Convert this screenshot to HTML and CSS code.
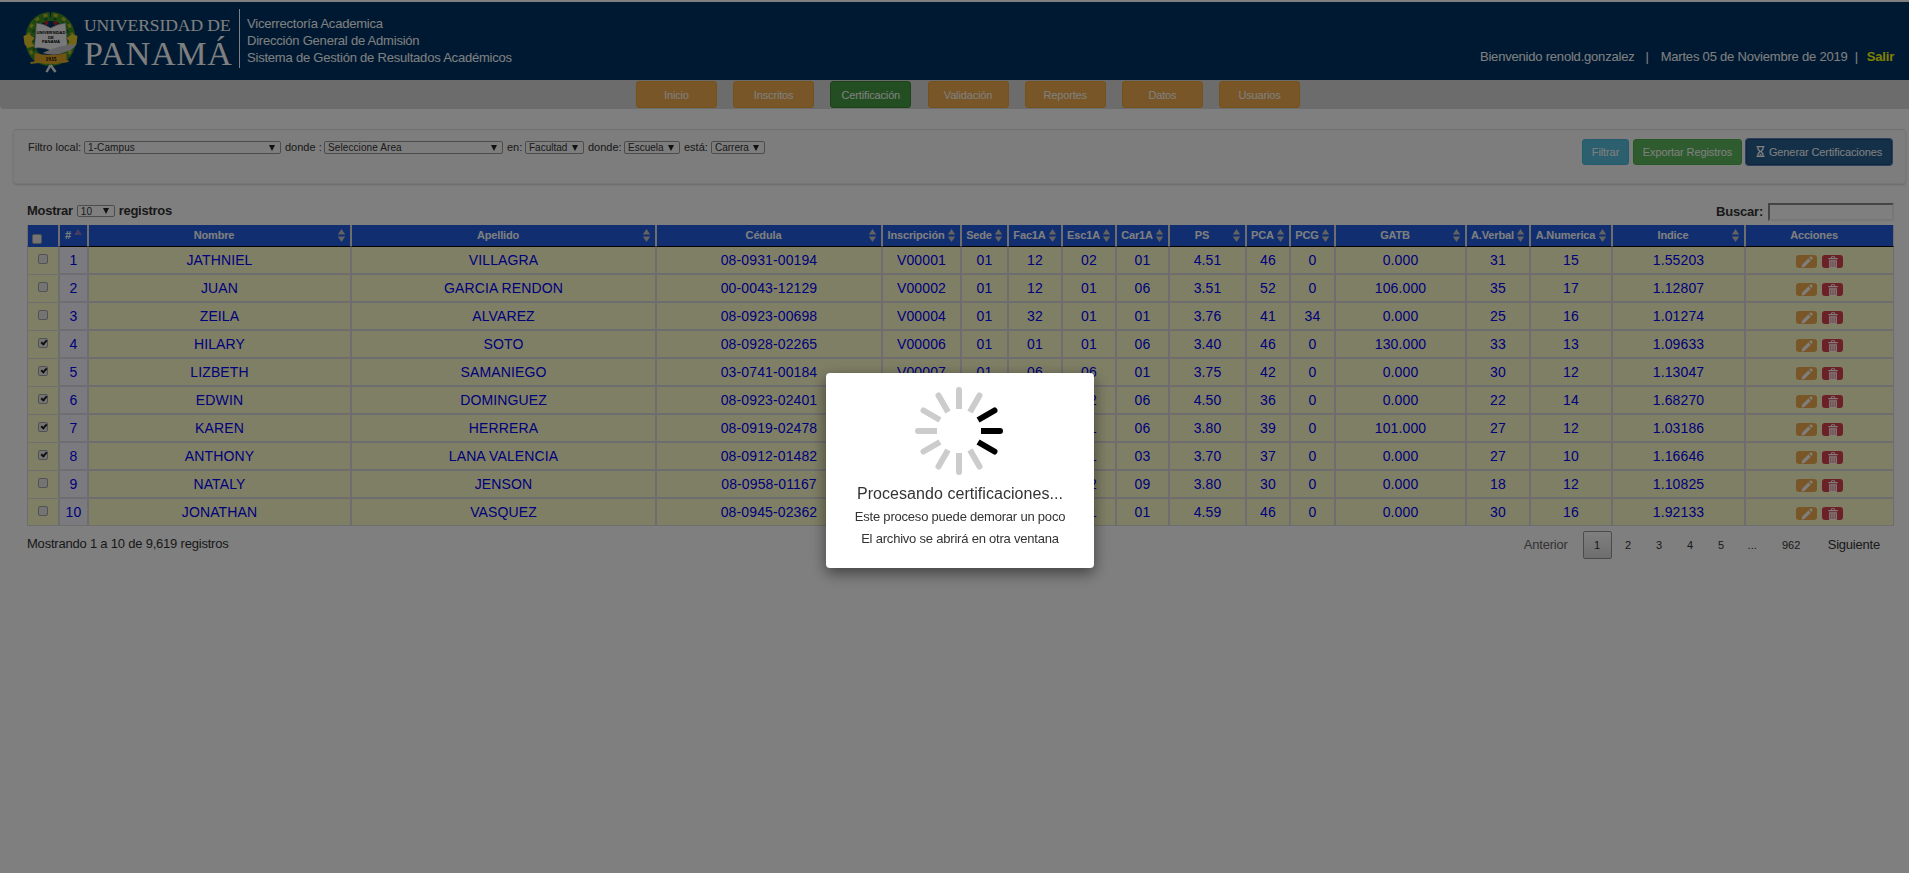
FILE: index.html
```html
<!DOCTYPE html>
<html lang="es">
<head>
<meta charset="utf-8">
<title>Certificación</title>
<link rel="stylesheet" href="styles.css">
</head>
<body>
<svg class="defs" width="0" height="0">
  <symbol id="pencil" viewBox="0 0 12 12"><path d="M0.4 11.8L1.3 8.5 7.4 2.4 9.7 4.7 3.6 10.8ZM8.1 1.7L9.3.6Q9.9.1 10.5.7L11.4 1.6Q12 2.2 11.5 2.8L10.4 4Z"/></symbol>
  <symbol id="trash" viewBox="0 0 12 13"><path fill-rule="evenodd" d="M1 2.2H4V1Q4 .3 4.7.3H7.3Q8 .3 8 1V2.2H11V3.6H1ZM5 2.2H7V1.2H5ZM1.8 4.5H10.2V13H1.8ZM3.3 5.6V12H4.1V5.6ZM5.6 5.6V12H6.4V5.6ZM7.9 5.6V12H8.7V5.6Z"/></symbol>
  <symbol id="sort" viewBox="0 0 8 14"><path d="M4 0L8 6H0ZM4 14L0 8H8Z"/></symbol>
</svg>

<header class="top">
  <svg class="crest" viewBox="0 0 56 64">
    <path d="M27 3C12 4 3 15 3 31C3 46 12 56 27 57L29 57C44 56 53 46 53 31C53 15 44 4 29 3L28 10Z" fill="#3f8f24"/>
    <path d="M27 12C17 13 12 20 12 31C12 41 17 48 28 48C39 48 44 41 44 31C44 20 39 13 29 12Z" fill="#003366"/>
    <g fill="none" stroke-width="3" stroke="#b8b52a" stroke-dasharray="4 5"><path d="M25 6C12 8 6 18 6 31C6 44 13 53 25 54"/><path d="M31 6C44 8 50 18 50 31C50 44 43 53 31 54"/></g>
    <g fill="none" stroke-width="2" stroke="#1e5f22" stroke-dasharray="3 6"><path d="M25 10C14 12 10 20 10 31C10 42 16 49 25 50"/><path d="M31 10C42 12 46 20 46 31C46 42 40 49 31 50"/></g>
    <path d="M1 27L6 25 12 29 9 33 12 37 5 39 2 35ZM55 27L50 25 44 29 47 33 44 37 51 39 54 35Z" fill="#e8c82c"/>
    <circle cx="24" cy="14" r="2" fill="#c81e1e"/><circle cx="33" cy="14" r="2" fill="#c81e1e"/>
    <path d="M14 14Q22 15 28 19Q35 15 43 14L45 39Q35 38 29 42Q22 38 12 39Z" fill="#f2f2f2" stroke="#9a9a9a" stroke-width=".6"/>
    <text x="28.500" y="25" class="crest-text">UNIVERSIDAD</text>
    <text x="28.500" y="29.500" class="crest-text">DE</text>
    <text x="28.500" y="34" class="crest-text">PANAMÁ</text>
    <path d="M20 44Q36 36 54 35Q50 42 42 43Q34 48 20 44Z" fill="#c9c9cc"/>
    <path d="M12 44Q28 48 44 44L44 53Q28 57 12 53Z" fill="#e2a92b"/>
    <path d="M8 54L16 53M40 53L46 52" stroke="#d9b52a" stroke-width="2"/>
    <text x="28.500" y="52" class="crest-year">1935</text>
    <path d="M28 56L24 63M28 56L33 63" stroke="#e9e9e9" stroke-width="2.500"/>
  </svg>
  <div class="brand"><div class="brand-sm">UNIVERSIDAD DE</div><div class="brand-lg">PANAMÁ</div></div>
  <div class="dept"><div>Vicerrectoría Academica</div><div>Dirección General de Admisión</div><div>Sistema de Gestión de Resultados Académicos</div></div>
  <div class="session"><span>Bienvenido renold.gonzalez</span><span class="bar1">|</span><span>Martes 05 de Noviembre de 2019</span><span class="bar2">|</span><b>Salir</b></div>
</header>
<nav class="menu">
  <a>Inicio</a><a>Inscritos</a><a class="active">Certificación</a><a>Validación</a><a>Reportes</a><a>Datos</a><a>Usuarios</a>
</nav>

<section class="filters">
  <div class="fields">
    <span class="w-local">Filtro local:</span><span class="select s1"><span>1-Campus</span><i></i></span>
    <span class="w-donde">donde :</span><span class="select s2"><span>Seleccione Area</span><i></i></span>
    <span class="w-en">en:</span><span class="select s3"><span>Facultad</span><i></i></span>
    <span class="w-donde2">donde:</span><span class="select s4"><span>Escuela</span><i></i></span>
    <span class="w-esta">está:</span><span class="select s5"><span>Carrera</span><i></i></span>
  </div>
  <div class="actions">
    <a class="btn info">Filtrar</a><a class="btn success">Exportar Registros</a><a class="btn primary"><svg class="glass" viewBox="0 0 9 11"><path d="M.5 .7H8.500M.5 10.300H8.500M2 1V3L4 5.500 2 8V10M7 1V3L5 5.500 7 8V10" stroke="#fff" stroke-width="1.300" fill="none"/><path d="M3 9.500L4.500 7.500 6 9.500Z" fill="#fff"/></svg>Generar Certificaciones</a>
  </div>
</section>

<main>
  <div class="tools">
    <div class="length"><b>Mostrar</b><span class="select s6"><span>10</span><i></i></span><b>registros</b></div>
    <div class="search"><b>Buscar:</b><span class="input"></span></div>
  </div>
  <table>
    <colgroup><col style="width:32px"><col style="width:29px"><col style="width:263px"><col style="width:305px"><col style="width:226px"><col style="width:79px"><col style="width:47px"><col style="width:54px"><col style="width:54px"><col style="width:53px"><col style="width:77px"><col style="width:44px"><col style="width:45px"><col style="width:131px"><col style="width:64px"><col style="width:82px"><col style="width:133px"><col style="width:149px"></colgroup>
    <thead><tr>
      <th class="all"><span class="check"></span></th><th class="num">#<i></i></th>
      <th>Nombre<svg><use href="#sort"/></svg></th><th>Apellido<svg><use href="#sort"/></svg></th><th>Cédula<svg><use href="#sort"/></svg></th><th>Inscripción<svg><use href="#sort"/></svg></th><th>Sede<svg><use href="#sort"/></svg></th><th>Fac1A<svg><use href="#sort"/></svg></th><th>Esc1A<svg><use href="#sort"/></svg></th><th>Car1A<svg><use href="#sort"/></svg></th><th>PS<svg><use href="#sort"/></svg></th><th>PCA<svg><use href="#sort"/></svg></th><th>PCG<svg><use href="#sort"/></svg></th><th>GATB<svg><use href="#sort"/></svg></th><th>A.Verbal<svg><use href="#sort"/></svg></th><th>A.Numerica<svg><use href="#sort"/></svg></th><th>Indice<svg><use href="#sort"/></svg></th><th>Acciones</th>
    </tr></thead>
    <tbody>
      <tr><td><span class="check"></span></td><td>1</td><td>JATHNIEL</td><td>VILLAGRA</td><td>08-0931-00194</td><td>V00001</td><td>01</td><td>12</td><td>02</td><td>01</td><td>4.51</td><td>46</td><td>0</td><td>0.000</td><td>31</td><td>15</td><td>1.55203</td><td><div class="ops"><a class="edit"><svg><use href="#pencil"/></svg></a><a class="del"><svg><use href="#trash"/></svg></a></div></td></tr>
      <tr><td><span class="check"></span></td><td>2</td><td>JUAN</td><td>GARCIA RENDON</td><td>00-0043-12129</td><td>V00002</td><td>01</td><td>12</td><td>01</td><td>06</td><td>3.51</td><td>52</td><td>0</td><td>106.000</td><td>35</td><td>17</td><td>1.12807</td><td><div class="ops"><a class="edit"><svg><use href="#pencil"/></svg></a><a class="del"><svg><use href="#trash"/></svg></a></div></td></tr>
      <tr><td><span class="check"></span></td><td>3</td><td>ZEILA</td><td>ALVAREZ</td><td>08-0923-00698</td><td>V00004</td><td>01</td><td>32</td><td>01</td><td>01</td><td>3.76</td><td>41</td><td>34</td><td>0.000</td><td>25</td><td>16</td><td>1.01274</td><td><div class="ops"><a class="edit"><svg><use href="#pencil"/></svg></a><a class="del"><svg><use href="#trash"/></svg></a></div></td></tr>
      <tr><td><span class="check on"></span></td><td>4</td><td>HILARY</td><td>SOTO</td><td>08-0928-02265</td><td>V00006</td><td>01</td><td>01</td><td>01</td><td>06</td><td>3.40</td><td>46</td><td>0</td><td>130.000</td><td>33</td><td>13</td><td>1.09633</td><td><div class="ops"><a class="edit"><svg><use href="#pencil"/></svg></a><a class="del"><svg><use href="#trash"/></svg></a></div></td></tr>
      <tr><td><span class="check on"></span></td><td>5</td><td>LIZBETH</td><td>SAMANIEGO</td><td>03-0741-00184</td><td>V00007</td><td>01</td><td>06</td><td>06</td><td>01</td><td>3.75</td><td>42</td><td>0</td><td>0.000</td><td>30</td><td>12</td><td>1.13047</td><td><div class="ops"><a class="edit"><svg><use href="#pencil"/></svg></a><a class="del"><svg><use href="#trash"/></svg></a></div></td></tr>
      <tr><td><span class="check on"></span></td><td>6</td><td>EDWIN</td><td>DOMINGUEZ</td><td>08-0923-02401</td><td></td><td></td><td></td><td>02</td><td>06</td><td>4.50</td><td>36</td><td>0</td><td>0.000</td><td>22</td><td>14</td><td>1.68270</td><td><div class="ops"><a class="edit"><svg><use href="#pencil"/></svg></a><a class="del"><svg><use href="#trash"/></svg></a></div></td></tr>
      <tr><td><span class="check on"></span></td><td>7</td><td>KAREN</td><td>HERRERA</td><td>08-0919-02478</td><td></td><td></td><td></td><td>01</td><td>06</td><td>3.80</td><td>39</td><td>0</td><td>101.000</td><td>27</td><td>12</td><td>1.03186</td><td><div class="ops"><a class="edit"><svg><use href="#pencil"/></svg></a><a class="del"><svg><use href="#trash"/></svg></a></div></td></tr>
      <tr><td><span class="check on"></span></td><td>8</td><td>ANTHONY</td><td>LANA VALENCIA</td><td>08-0912-01482</td><td></td><td></td><td></td><td>01</td><td>03</td><td>3.70</td><td>37</td><td>0</td><td>0.000</td><td>27</td><td>10</td><td>1.16646</td><td><div class="ops"><a class="edit"><svg><use href="#pencil"/></svg></a><a class="del"><svg><use href="#trash"/></svg></a></div></td></tr>
      <tr><td><span class="check"></span></td><td>9</td><td>NATALY</td><td>JENSON</td><td>08-0958-01167</td><td></td><td></td><td></td><td>02</td><td>09</td><td>3.80</td><td>30</td><td>0</td><td>0.000</td><td>18</td><td>12</td><td>1.10825</td><td><div class="ops"><a class="edit"><svg><use href="#pencil"/></svg></a><a class="del"><svg><use href="#trash"/></svg></a></div></td></tr>
      <tr><td><span class="check"></span></td><td>10</td><td>JONATHAN</td><td>VASQUEZ</td><td>08-0945-02362</td><td></td><td></td><td></td><td>01</td><td>01</td><td>4.59</td><td>46</td><td>0</td><td>0.000</td><td>30</td><td>16</td><td>1.92133</td><td><div class="ops"><a class="edit"><svg><use href="#pencil"/></svg></a><a class="del"><svg><use href="#trash"/></svg></a></div></td></tr>
    </tbody>
  </table>
  <div class="foot">
    <div class="count">Mostrando 1 a 10 de 9,619 registros</div>
    <div class="pages"><span class="prev">Anterior</span><span class="pg current">1</span><span class="pg">2</span><span class="pg">3</span><span class="pg">4</span><span class="pg">5</span><span class="pg dots">...</span><span class="pg last">962</span><span class="next">Siguiente</span></div>
  </div>
</main>

<div class="overlay">
  <div class="modal">
    <svg class="spinner" viewBox="-45 -45 90 90">
      <defs><path id="ray" d="M22 -3H41A3 3 0 0 1 41 3H22Z"/></defs>
      <g fill="#000"><use href="#ray" transform="rotate(-30)"/><use href="#ray"/><use href="#ray" transform="rotate(30)"/></g>
      <g fill="#ccc"><use href="#ray" transform="rotate(60)"/><use href="#ray" transform="rotate(90)"/><use href="#ray" transform="rotate(120)"/><use href="#ray" transform="rotate(150)"/><use href="#ray" transform="rotate(180)"/><use href="#ray" transform="rotate(210)"/><use href="#ray" transform="rotate(240)"/><use href="#ray" transform="rotate(270)"/><use href="#ray" transform="rotate(300)"/></g>
    </svg>
    <div class="title">Procesando certificaciones...</div>
    <div class="line">Este proceso puede demorar un poco</div>
    <div class="line">El archivo se abrirá en otra ventana</div>
  </div>
</div>
</body>
</html>
```
FILE: styles.css
```css
* { box-sizing: border-box; }
body {
  margin: 0;
  height: 873px;
  overflow: hidden;
  background: #fff;
  color: #333;
  font: 13px/17px "Liberation Sans", Arial, sans-serif;
  letter-spacing: -.21px;
}
.defs { position: absolute; }

.top {
  display: flex;
  height: 80px;
  padding: 0 15px 0 22px;
  border-top: 2px solid #fff;
  background: #003366;
  color: #fff;
}
.crest { flex: none; width: 57px; height: 64px; margin-top: 7px; }
.crest-text { font: bold 4.2px "Liberation Sans", sans-serif; text-anchor: middle; letter-spacing: 0; }
.crest-year { font: bold 5.5px "Liberation Serif", serif; text-anchor: middle; letter-spacing: 0; }
.brand {
  flex: none;
  width: 161px;
  height: 59px;
  margin-top: 7px;
  padding: 6px 0 0 5px;
  border-right: 1px solid #fff;
  font-family: "Liberation Serif", "Times New Roman", serif;
  white-space: nowrap;
}
.brand-sm { font-size: 17.5px; line-height: 20px; letter-spacing: -.05px; }
.brand-lg { font-size: 34px; line-height: 38px; letter-spacing: .7px; }
.dept { margin: 13px 0 0 7px; }
.session { display: flex; margin: 46px 0 0 auto; letter-spacing: -.2px; white-space: nowrap; }
.session b { color: #ff0; }
.bar1 { margin: 0 12px 0 11px; }
.bar2 { margin: 0 9px 0 7px; }

.menu {
  display: flex;
  justify-content: center;
  gap: 16.2px;
  height: 29px;
  padding: 1px 0 0 27px;
  background: #d9d9d9;
  border-bottom-left-radius: 4px;
}
.menu a {
  width: 81px;
  height: 27px;
  border: 1px solid #eea236;
  border-radius: 3px;
  background: #f0ad4e;
  color: #fff;
  font-size: 11px;
  line-height: 26px;
  text-align: center;
  letter-spacing: -.15px;
}
.menu .active { background: #449d44; border-color: #398439; }

.filters {
  display: flex;
  justify-content: space-between;
  height: 55px;
  margin: 20px 3px 0 13px;
  padding: 9px 13px 0 14px;
  border: 1px solid #efefef;
  border-top-color: #e0e0e0;
  border-radius: 4px;
  background: #fafafa;
  box-shadow: 0 1px 2px rgba(0,0,0,.18);
}
.fields { display: flex; height: 17px; font-size: 11px; letter-spacing: 0; white-space: nowrap; }
.w-local { width: 56px; }
.w-donde { width: 43px; padding-left: 4px; }
.w-en { width: 22px; padding-left: 4px; }
.w-donde2 { width: 40px; padding-left: 4px; }
.w-esta { width: 31px; padding-left: 4px; }
.select {
  display: flex;
  align-items: center;
  justify-content: space-between;
  height: 13px;
  margin-top: 2px;
  padding: 0 5px 0 3px;
  border: 1px solid #999;
  border-radius: 2px;
  font-size: 10px;
  line-height: 11px;
  letter-spacing: .1px;
}
.select i { border: 3.5px solid transparent; border-top: 6px solid #222; border-bottom: 0; }
.s1 { width: 197px; }
.s2 { width: 179px; }
.s3 { width: 59px; letter-spacing: 0; }
.s4 { width: 56px; letter-spacing: 0; }
.s5 { width: 54px; letter-spacing: 0; }
.s6 { width: 38px; height: 12px; margin: 3px 4px 0; }
.actions { display: flex; }
.btn {
  height: 26px;
  border: 1px solid;
  border-radius: 3px;
  color: #fff;
  font-size: 11px;
  line-height: 25px;
  text-align: center;
  letter-spacing: -.1px;
  white-space: nowrap;
}
.info { width: 47px; margin-right: 4px; background: #5bc0de; border-color: #46b8da; }
.success { width: 109px; margin-right: 4px; background: #5cb85c; border-color: #4cae4c; }
.primary { width: 146px; background: #286090; border-color: #204d74; box-shadow: 0 0 0 1px #5a7fc0; }
.glass { width: 9px; height: 11px; margin-right: 4px; vertical-align: -1px; }

main { padding: 19px 15px 0 27px; }
.tools { display: flex; justify-content: space-between; height: 22px; }
.length { display: flex; margin-top: -1px; letter-spacing: -.28px; }
.search { display: flex; }
.input { width: 126px; height: 18px; margin-left: 5px; border: 2px solid #eee; border-top-color: #8a8a8a; border-left-color: #8a8a8a; }

table { width: 1867px; table-layout: fixed; border-collapse: separate; border-spacing: 0; }
th {
  position: relative;
  height: 22px;
  padding: 0 11px 1px 0;
  border: 1px solid #ddd;
  border-width: 0 1px 1px;
  border-bottom-color: #000;
  background: #225ee0;
  color: #fff;
  font-size: 11px;
  line-height: 19px;
  letter-spacing: -.15px;
  white-space: nowrap;
}
th svg { position: absolute; right: 4px; top: 4px; width: 9px; height: 13px; fill: #c4c4c4; }
.num i { position: absolute; right: 5px; top: 4px; border: 4px solid transparent; border-top: 0; border-bottom: 6px solid #8d79c9; }
th.all { border-bottom-color: #225ee0; }
th.all .check { margin: 7px 0 0 4px; }
td {
  height: 28px;
  padding: 0;
  border: 1px solid #dcdce0;
  background: #ffffcc;
  color: #0000f4;
  font-size: 14px;
  line-height: 26px;
  letter-spacing: .12px;
  text-align: center;
}
tbody tr:first-child td { height: 27px; border-top: 0; }
td:nth-child(1) { border-bottom-width: 0; }
tbody tr:last-child td:nth-child(1) { border-bottom-width: 1px; }
td:nth-child(2) { background: #f4f4ff; }
.check { display: block; width: 10px; height: 10px; margin: 0 auto 3px; border: 1px solid #a4a4a4; border-radius: 2px; background: #e8e8e8; }
.on::after { content: ""; display: block; box-sizing: content-box; width: 2px; height: 4px; margin-left: 2.5px; border: solid #222; border-width: 0 2px 2px 0; transform: rotate(42deg); }
.ops { display: flex; justify-content: center; gap: 5px; padding-top: 2px; }
.ops a { display: flex; justify-content: center; width: 21px; height: 13px; border-radius: 3px; background: #f0ad4e; }
.ops .del { background: #d9434f; }
.ops svg { width: 12px; height: 12px; margin-top: 1px; fill: #fff; }

.foot { display: flex; justify-content: space-between; padding-top: 5px; }
.count { margin-top: 4px; }
.pages { display: flex; padding-right: 14px; line-height: 28px; }
.prev { color: #666; margin-right: 15px; }
.pg { width: 31px; font-size: 11px; text-align: center; letter-spacing: 0; }
.current { width: 29px; height: 28px; margin-right: 1px; border: 1px solid #979797; border-radius: 2px; background: linear-gradient(#fff, #dcdcdc); line-height: 27px; }
.last { width: 47px; }
.next { margin-left: 13px; }

.overlay { position: fixed; inset: 0; display: flex; background: rgba(0,0,0,.5); }
.modal {
  width: 268px;
  height: 195px;
  margin: 373px 0 0 826px;
  padding-top: 13px;
  border-radius: 4px;
  background: #fff;
  box-shadow: 0 5px 15px rgba(0,0,0,.5);
  text-align: center;
}
.spinner { display: block; width: 90px; height: 90px; margin-left: 88px; }
.title { margin-top: 8px; font-size: 16px; line-height: 20px; letter-spacing: .05px; }
.line { margin-top: 4px; line-height: 18px; }
```
